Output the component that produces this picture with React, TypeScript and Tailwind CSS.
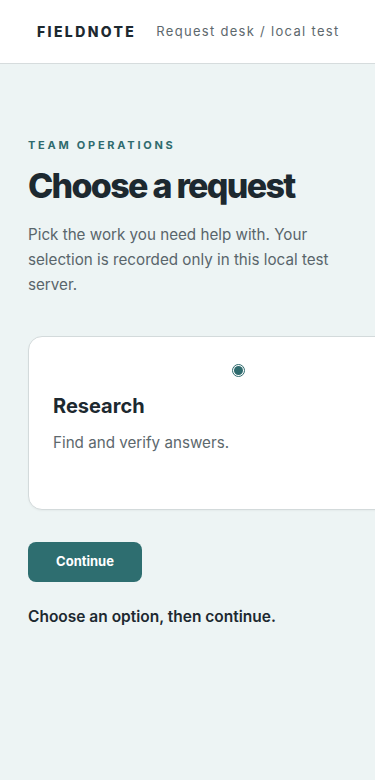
export default function App() {
  return (
    <div className="min-h-[780px] overflow-hidden bg-[#edf4f4] font-['Inter',sans-serif] text-[#1d2930]">
      {/* top bar */}
      <header className="flex h-[64px] items-center gap-[20px] whitespace-nowrap border-b border-[#d6dcdd] bg-white pl-[37px]">
        <span className="text-[14px] font-extrabold tracking-[0.17em] text-[#1d2930]">FIELDNOTE</span>
        <span className="text-[13px] tracking-[0.1em] text-[#5d686d]">Request desk / local test</span>
      </header>

      <main className="px-[28px] pt-[73px]">
        <p className="text-[11px] font-bold tracking-[0.25em] text-[#2f6b6e]">TEAM OPERATIONS</p>
        <h1 className="mt-[12px] text-[34px] font-extrabold leading-[40px] tracking-[-0.05em] text-[#1d2930]">
          Choose a request
        </h1>
        <p className="mt-[16px] text-[15.2px] leading-[25px] text-[#59656b]">
          Pick the work you need help with. Your selection is recorded only in this local test server.
        </p>

        {/* option card */}
        <label className="mt-[39px] flex h-[174px] w-[420px] flex-col rounded-[14px] border border-[#d3dadb] bg-white px-[24px] pt-[27px] shadow-[0_1px_2px_rgba(0,0,0,0.04)]">
          <span className="flex justify-center">
            <span className="flex h-[13px] w-[13px] items-center justify-center rounded-full border border-[#2f6b6e] bg-white">
              <span className="h-[9px] w-[9px] rounded-full bg-[#2f6b6e]" />
            </span>
          </span>
          <span className="mt-[15px] text-[20px] font-bold leading-[28px] text-[#1d2930]">Research</span>
          <span className="mt-[11px] text-[15.2px] leading-[24px] text-[#5d686d]">Find and verify answers.</span>
        </label>

        <button className="mt-[32px] h-[40px] w-[114px] rounded-[8px] bg-[#2e6e70] text-[13px] font-bold text-white">
          Continue
        </button>
        <p className="mt-[24px] text-[15.5px] font-semibold leading-[22px] text-[#1d2930]">
          Choose an option, then continue.
        </p>
      </main>
    </div>
  );
}
